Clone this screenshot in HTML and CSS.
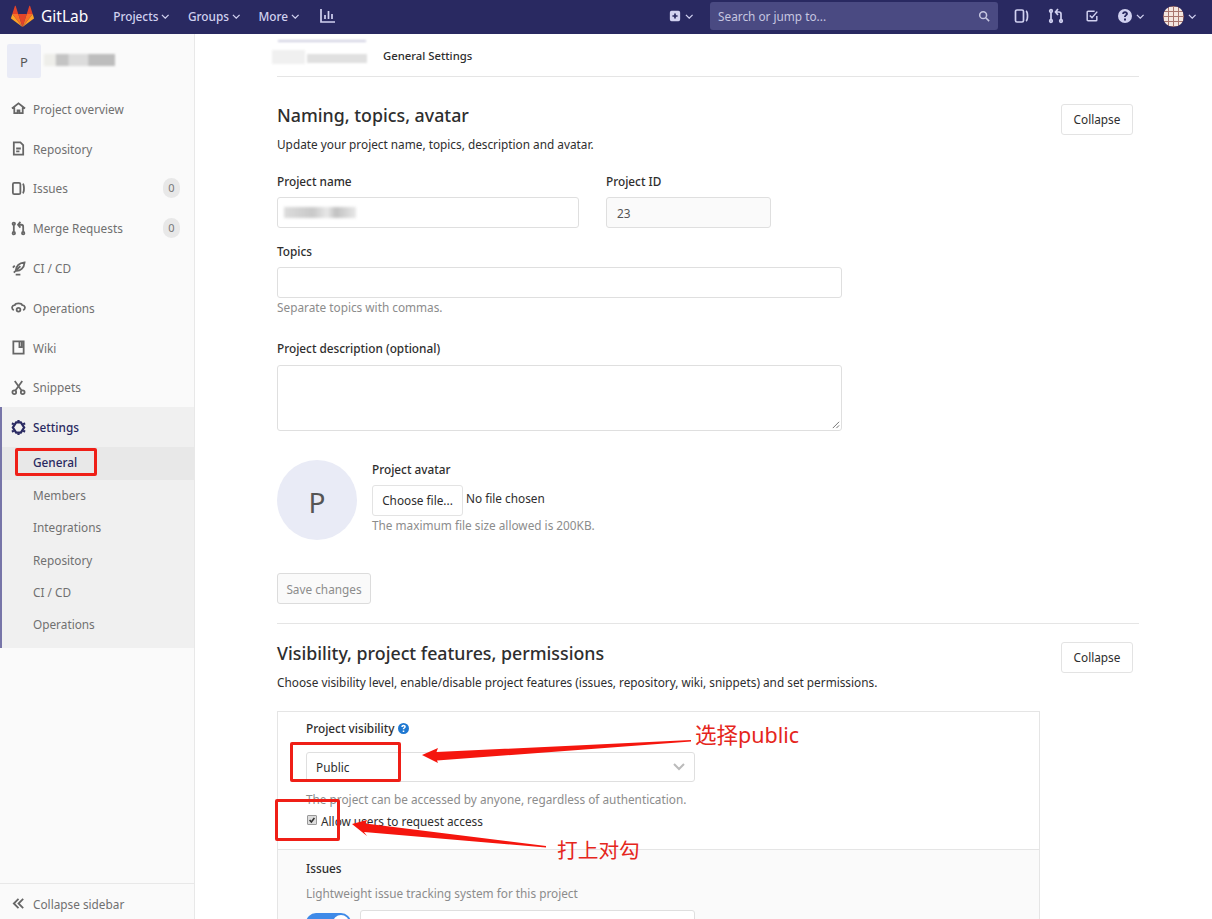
FILE: index.html
```html
<!DOCTYPE html>
<html lang="en">

<head>
    <meta charset="UTF-8">
    <meta name="viewport" content="width=device-width, initial-scale=1.0">
    <title>General Settings</title>
    <link rel="stylesheet" href="styles.css">
</head>

<body>
    <header class="navbar">
        <div class="nav-left">
            <a class="brand">
                <svg class="tanuki" viewBox="0 0 36 36">
                    <path fill="#e24329" d="M18 34.38l6.63-20.4H11.37z" />
                    <path fill="#fc6d26" d="M18 34.38l-6.63-20.4H2.07z" />
                    <path fill="#fca326" d="M2.07 13.98L.05 20.18c-.18.56.02 1.18.5 1.53L18 34.38z" />
                    <path fill="#e24329" d="M2.07 13.98h9.3L7.37 1.68c-.2-.63-1.1-.63-1.3 0z" />
                    <path fill="#fc6d26" d="M18 34.38l6.63-20.4h9.3z" />
                    <path fill="#fca326" d="M33.93 13.98l2.02 6.2c.18.56-.02 1.18-.5 1.53L18 34.38z" />
                    <path fill="#e24329" d="M33.93 13.98h-9.3l4-12.3c.2-.63 1.1-.63 1.3 0z" />
                </svg>
                <span>GitLab</span>
            </a>
            <a class="nav-link">Projects <svg class="caret" viewBox="0 0 10 6"><path d="M1 1l4 4 4-4" /></svg></a>
            <a class="nav-link">Groups <svg class="caret" viewBox="0 0 10 6"><path d="M1 1l4 4 4-4" /></svg></a>
            <a class="nav-link">More <svg class="caret" viewBox="0 0 10 6"><path d="M1 1l4 4 4-4" /></svg></a>
            <svg class="nav-icon chart" viewBox="0 0 16 16"><path d="M1 1v13h14M5 7v4M8.500 3v8M12 6v5" /></svg>
        </div>
        <div class="nav-right">
            <a class="nav-plus">
                <svg class="solid-icon" viewBox="0 0 14 14"><path fill-rule="evenodd" d="M3 1h8a2 2 0 0 1 2 2v8a2 2 0 0 1-2 2H3a2 2 0 0 1-2-2V3a2 2 0 0 1 2-2zm3 3v2H4v2h2v2h2V8h2V6H8V4z" /></svg>
                <svg class="caret" viewBox="0 0 10 6"><path d="M1 1l4 4 4-4" /></svg>
            </a>
            <div class="search">
                <span>Search or jump to...</span>
                <svg class="search-icon" viewBox="0 0 14 14"><circle cx="6" cy="6" r="4" /><path d="M9 9l4 4" /></svg>
            </div>
            <svg class="nav-icon issues-top" viewBox="0 0 16 16"><rect x="1.500" y="2" width="8" height="12" rx="1.500" /><path d="M12 3c2 1 2 9 0 10" /></svg>
            <svg class="nav-icon mr-top" viewBox="0 0 16 16"><circle cx="3" cy="3" r="1.300" /><circle cx="3" cy="13" r="1.300" /><circle cx="13" cy="13" r="1.300" /><path d="M3 4.500v7M13 11.500V6c0-1.500-1-2-2-2H8M10 1L7.500 4 10 7" /></svg>
            <svg class="nav-icon todo-top" viewBox="0 0 16 16"><path d="M13.500 8v4.500a1 1 0 0 1-1 1h-9a1 1 0 0 1-1-1v-9a1 1 0 0 1 1-1H11M5.500 7.500L8 10l6-7" /></svg>
            <a class="nav-help">
                <svg class="solid-icon" viewBox="0 0 14 14"><path fill-rule="evenodd" d="M7 0a7 7 0 1 1 0 14A7 7 0 0 1 7 0zM6 9.500v2h2v-2zM4.200 5h1.900c.1-.7.4-1 .9-1s.9.300.9.800c0 .5-.3.700-.8 1.100-.7.500-1.100 1-1.100 2.100h1.900c0-.6.200-.9.800-1.300.7-.5 1.200-1.100 1.200-2 0-1.500-1.200-2.400-2.900-2.400S4.300 3.300 4.200 5z" /></svg>
                <svg class="caret" viewBox="0 0 10 6"><path d="M1 1l4 4 4-4" /></svg>
            </a>
            <a class="nav-user">
                <span class="user-avatar"></span>
                <svg class="caret" viewBox="0 0 10 6"><path d="M1 1l4 4 4-4" /></svg>
            </a>
        </div>
    </header>

    <div class="page">
        <aside class="sidebar">
            <div class="side-top">
                <div class="side-head">
                    <span class="side-avatar">P</span>
                    <span class="blur-name"></span>
                </div>
                <ul class="side-nav">
                    <li>
                        <svg class="side-icon" viewBox="0 0 16 16"><path d="M1 8l7-5.500L15 8M3.500 7v6h3.500v-3h2v3h3.500V7" /></svg>
                        <span>Project overview</span>
                    </li>
                    <li>
                        <svg class="side-icon" viewBox="0 0 16 16"><path d="M3 1.500h7l3 3v10H3zM5.500 8h5M5.500 11h3.500" /></svg>
                        <span>Repository</span>
                    </li>
                    <li>
                        <svg class="side-icon" viewBox="0 0 16 16"><rect x="2" y="2" width="8" height="12" rx="1.500" /><path d="M12.500 3c1.800 1 1.800 9 0 10" /></svg>
                        <span>Issues</span>
                        <b class="count">0</b>
                    </li>
                    <li>
                        <svg class="side-icon" viewBox="0 0 16 16"><circle cx="3" cy="3" r="1.300" /><circle cx="3" cy="13" r="1.300" /><circle cx="13" cy="13" r="1.300" /><path d="M3 4.500v7M13 11.500V6c0-1.500-1-2-2-2H8M10 1L7.500 4 10 7" /></svg>
                        <span>Merge Requests</span>
                        <b class="count">0</b>
                    </li>
                    <li>
                        <svg class="side-icon" viewBox="0 0 16 16"><path d="M14.500 1.500C9 2 5.500 5 5 10.500c5 .5 9-3 9.500-9zM5 14.500h5M10 5.500L3 12.500M2 7l2-2" /></svg>
                        <span>CI / CD</span>
                    </li>
                    <li>
                        <svg class="side-icon" viewBox="0 0 16 16"><path d="M3 11C0 9 1 5.500 4 5.500 5 3 11 3 12 5.500c3 0 4 3.500 1 5.500" /><circle cx="8" cy="10.500" r="2" /></svg>
                        <span>Operations</span>
                    </li>
                    <li>
                        <svg class="side-icon" viewBox="0 0 16 16"><path d="M2.500 1.500h11v13h-11zM9 1.500v6h2.500v-6" /></svg>
                        <span>Wiki</span>
                    </li>
                    <li>
                        <svg class="side-icon" viewBox="0 0 16 16"><circle cx="3.500" cy="13" r="2" /><circle cx="12.500" cy="13" r="2" /><path d="M4.500 11.500L12 1M11.500 11.500L4 1" /></svg>
                        <span>Snippets</span>
                    </li>
                </ul>
                <div class="side-active">
                    <div class="side-settings">
                        <svg class="side-icon gear" viewBox="0 0 16 16"><path d="M5.500 2.500h5L14 8l-3.500 5.500h-5L2 8z" /><path d="M8 0v2M8 14v2M1 3.500l2 1.200M15 3.500l-2 1.200M1 12.500l2-1.200M15 12.500l-2-1.200" /></svg>
                        <span>Settings</span>
                    </div>
                    <ul class="side-sub">
                        <li class="current">General</li>
                        <li>Members</li>
                        <li>Integrations</li>
                        <li>Repository</li>
                        <li>CI / CD</li>
                        <li>Operations</li>
                    </ul>
                </div>
            </div>
            <div class="side-collapse">
                <svg class="side-icon" viewBox="0 0 16 16"><path d="M8 3L3 8l5 5M13 3L8 8l5 5" /></svg>
                <span>Collapse sidebar</span>
            </div>
        </aside>

        <main class="content">
            <div class="crumbs">
                <span class="blur-crumb"></span>
                <span class="crumb-now">General Settings</span>
            </div>

            <section class="block first">
                <div class="block-head">
                    <div>
                        <h2>Naming, topics, avatar</h2>
                        <p class="lead">Update your project name, topics, description and avatar.</p>
                    </div>
                    <button class="btn collapse">Collapse</button>
                </div>

                <div class="row-two">
                    <div class="name-col">
                        <label>Project name</label>
                        <div class="input"><span class="blur-input"></span></div>
                    </div>
                    <div class="id-col">
                        <label>Project ID</label>
                        <div class="input readonly">23</div>
                    </div>
                </div>

                <div class="wide topics">
                    <label>Topics</label>
                    <div class="input"></div>
                    <p class="help">Separate topics with commas.</p>
                </div>

                <div class="wide descr">
                    <label>Project description (optional)</label>
                    <div class="input area">
                        <svg class="grip" viewBox="0 0 10 10"><path d="M9 2L2 9M9 6L6 9" /></svg>
                    </div>
                </div>

                <div class="avatar-row">
                    <div class="big-avatar">P</div>
                    <div class="avatar-form">
                        <label>Project avatar</label>
                        <div class="file-row">
                            <button class="btn file-btn">Choose file...</button>
                            <span>No file chosen</span>
                        </div>
                        <p class="help">The maximum file size allowed is 200KB.</p>
                    </div>
                </div>

                <button class="btn save">Save changes</button>
            </section>

            <section class="block second">
                <div class="block-head">
                    <div>
                        <h2>Visibility, project features, permissions</h2>
                        <p class="lead">Choose visibility level, enable/disable project features (issues, repository, wiki, snippets) and set permissions.</p>
                    </div>
                    <button class="btn collapse">Collapse</button>
                </div>

                <div class="panel">
                    <div class="panel-main">
                        <label>Project visibility
                            <svg class="q-icon" viewBox="0 0 14 14"><path fill-rule="evenodd" d="M7 0a7 7 0 1 1 0 14A7 7 0 0 1 7 0zM6 9.500v2h2v-2zM4.200 5h1.900c.1-.7.4-1 .9-1s.9.300.9.800c0 .5-.3.700-.8 1.100-.7.500-1.100 1-1.100 2.100h1.900c0-.6.200-.9.800-1.300.7-.5 1.200-1.100 1.200-2 0-1.500-1.200-2.400-2.900-2.400S4.300 3.300 4.200 5z" /></svg>
                        </label>
                        <div class="input select">
                            <span>Public</span>
                            <svg class="select-caret" viewBox="0 0 12 8"><path d="M1 1l5 5 5-5" /></svg>
                        </div>
                        <p class="help">The project can be accessed by anyone, regardless of authentication.</p>
                        <div class="check-row">
                            <span class="check">
                                <svg viewBox="0 0 10 10"><path d="M2 5l2.200 2.500L8 2.500" /></svg>
                            </span>
                            <span>Allow users to request access</span>
                        </div>
                    </div>
                    <div class="panel-sub">
                        <label>Issues</label>
                        <p class="help">Lightweight issue tracking system for this project</p>
                        <div class="toggle-row">
                            <span class="toggle"><i></i></span>
                            <div class="input toggle-select"></div>
                        </div>
                    </div>
                </div>
            </section>
        </main>
    </div>

    <!-- red marks drawn on top of the screenshot -->
    <div class="mark mark-general"></div>
    <div class="mark mark-public"></div>
    <div class="mark mark-check"></div>
    <svg class="arrows" viewBox="0 0 1212 919">
        <path d="M422 755L438 748 436.500 752 691 740 691 741.500 437 760.500 438 763z" />
        <path d="M352 824L367 820 365.500 823.500 546 846 546 847.500 364 832 367 836z" />
    </svg>
    <span class="note note-public">选择public</span>
    <span class="note note-check">打上对勾</span>
</body>

</html>
```

FILE: styles.css
```css
* {
    margin: 0;
    padding: 0;
    box-sizing: border-box;
}

html,
body {
    height: 919px;
    overflow: hidden;
}

body {
    background: #fff;
    color: #2e2e2e;
    font-family: "Noto Sans", "Noto Sans CJK SC", sans-serif;
    font-size: 11.800px;
    line-height: 18px;
}

ul {
    list-style: none;
}

/* top bar */
.navbar {
    height: 34px;
    padding-bottom: 2px;
    background: #292961;
    color: #d1d1f0;
    display: flex;
    justify-content: space-between;
    align-items: center;
}

.nav-left,
.nav-right {
    display: flex;
    align-items: center;
}

.brand {
    display: flex;
    align-items: center;
    margin-left: 11px;
    margin-right: 25px;
    color: #fff;
    font-size: 15.500px;
}

.tanuki {
    width: 23px;
    height: 23px;
    margin-right: 7px;
}

.nav-link {
    margin-right: 18px;
    font-weight: 500;
    white-space: nowrap;
}

.caret {
    width: 8.500px;
    height: 5px;
    vertical-align: 2px;
    fill: none;
    stroke: #d1d1f0;
    stroke-width: 1.500;
}

.nav-icon {
    width: 16px;
    height: 16px;
    fill: none;
    stroke: #d1d1f0;
    stroke-width: 1.700;
}

.chart {
    margin-left: 2px;
}

.solid-icon {
    width: 12px;
    height: 12px;
    fill: #d1d1f0;
}

.nav-plus {
    display: flex;
    align-items: center;
    gap: 4px;
    margin-right: 17px;
}

.search {
    width: 288px;
    height: 28px;
    margin-right: 16px;
    padding: 0 8px;
    border-radius: 3px;
    background: #4a4a82;
    display: flex;
    align-items: center;
    justify-content: space-between;
    color: #c6c6e0;
}

.search-icon {
    width: 12px;
    height: 12px;
    fill: none;
    stroke: #c6c6e0;
    stroke-width: 1.800;
}

.mr-top {
    margin-left: 18px;
}

.todo-top {
    margin-left: 21px;
    width: 14px;
    height: 14px;
}

.nav-help {
    display: flex;
    align-items: center;
    gap: 4px;
    margin-left: 19px;
    margin-right: 18px;
}

.nav-help .solid-icon {
    width: 14px;
    height: 14px;
}

.nav-user {
    display: flex;
    align-items: center;
    gap: 4px;
    margin-right: 16px;
}

.user-avatar {
    width: 21px;
    height: 21px;
    border-radius: 50%;
    background-color: #f3e6e0;
    background-image: linear-gradient(90deg, #a8756e 1.500px, transparent 1.500px), linear-gradient(#a8756e 1.500px, transparent 1.500px);
    background-size: 5px 5px;
}

/* sidebar and content */
.page {
    display: flex;
    height: 885px;
}

.sidebar {
    width: 195px;
    flex: none;
    background: #fafafa;
    border-right: 1px solid #e8e8e8;
    display: flex;
    flex-direction: column;
    justify-content: space-between;
    color: #707070;
}

.side-head {
    height: 55px;
    padding: 10px 0 0 7px;
    display: flex;
}

.side-avatar {
    width: 34px;
    height: 34px;
    border-radius: 2px;
    background: #e9ebf6;
    color: #555;
    font-size: 13px;
    line-height: 36px;
    text-align: center;
}

.blur-name {
    width: 71px;
    height: 12px;
    margin: 10px 0 0 3px;
    background: linear-gradient(90deg, #eeeeea 0, #eeeeea 16%, #c4c4c4 17%, #c4c4c4 34%, #dcdcdc 35%, #dcdcdc 62%, #bdbdbd 63%);
    filter: blur(1px);
}

.side-nav li {
    height: 39.800px;
    padding: 0 14px 0 11px;
    display: flex;
    align-items: center;
}

.side-icon {
    width: 15px;
    height: 15px;
    margin-right: 7px;
    flex: none;
    fill: none;
    stroke: #666;
    stroke-width: 1.900;
}

.count {
    margin-left: auto;
    width: 17px;
    height: 20px;
    border-radius: 9px;
    background: #e8e8e8;
    color: #777;
    font-weight: 400;
    font-size: 11px;
    line-height: 20px;
    text-align: center;
}

.side-active {
    padding-bottom: 6px;
    background: #f0f0f0;
    border-left: 2px solid #7775a8;
}

.side-settings {
    height: 40px;
    padding-left: 9px;
    display: flex;
    align-items: center;
    color: #292961;
    font-weight: 500;
}

.gear {
    stroke: #292961;
    stroke-width: 2.400;
}

.side-sub li {
    height: 32.400px;
    padding-left: 31px;
    line-height: 30px;
}

.side-sub .current {
    background: #e8e8e8;
    color: #292961;
    font-weight: 500;
}

.side-collapse {
    height: 36px;
    padding: 4px 0 0 11px;
    border-top: 1px solid #e8e8e8;
    display: flex;
    align-items: center;
}

.content {
    width: 862px;
    margin-left: 82px;
    flex: none;
}

.crumbs {
    height: 43px;
    border-bottom: 1px solid #e5e5e5;
    position: relative;
    padding-left: 106px;
    padding-top: 12px;
}

/* blurred out group and project name */
.blur-crumb {
    position: absolute;
    left: -5px;
    top: 6px;
    width: 100px;
    height: 26px;
    background:
        linear-gradient(#cfcfe0, #cfcfe0) 6px 0 / 88px 2px no-repeat,
        linear-gradient(#f0f0f0, #f0f0f0) 0 10px / 33px 14px no-repeat,
        linear-gradient(#e0e0e0, #e0e0e0) 35px 14px / 60px 9px no-repeat;
    filter: blur(1px);
}

.crumb-now {
    color: #2e2e2e;
    font-weight: 500;
    font-size: 11.300px;
}

.block.first {
    padding-top: 26px;
    height: 547px;
    border-bottom: 1px solid #e5e5e5;
}

.block.second {
    padding-top: 17px;
}

.block-head {
    display: flex;
    justify-content: space-between;
    padding-right: 6px;
}

h2 {
    color: #2e2e2e;
    font-size: 17.800px;
    font-weight: 500;
    line-height: 24px;
    margin-bottom: 9px;
}

/* 16px line plus 2px under it puts the text one pixel higher in its 18px row */
.lead,
.help,
label,
.check-row {
    line-height: 16px;
    padding-bottom: 2px;
}

.btn {
    height: 31px;
    padding: 0 12px;
    border: 1px solid #e3e3e3;
    border-radius: 3px;
    background: #fff;
    color: #2e2e2e;
    font: inherit;
    margin-top: 1px;
}

.collapse {
    width: 72px;
    padding: 0 0 2px;
}

label {
    display: block;
    color: #2e2e2e;
    font-weight: 500;
}

.input {
    height: 31px;
    margin-top: 6px;
    border: 1px solid #dfdfdf;
    border-radius: 3px;
    background: #fff;
}

.row-two {
    display: flex;
    margin-top: 19px;
}

.name-col {
    width: 302px;
    margin-right: 27px;
}

.id-col {
    width: 165px;
}

.readonly {
    background: #fafafa;
    color: #555;
    padding: 6px 10px;
}

.blur-input {
    display: block;
    width: 72px;
    height: 11px;
    margin: 9px 0 0 6px;
    background: linear-gradient(90deg, #dcdcdc 0, #c8c8c8 40%, #e8e8e8 60%, #c0c0c0 72%, #e8e8e8 100%);
    filter: blur(1.500px);
}

.wide {
    width: 565px;
}

.topics {
    margin-top: 15px;
}

.help {
    color: #8c8c8c;
}

.topics .help {
    margin-top: 1px;
}

.descr {
    margin-top: 23px;
}

.area {
    height: 66px;
    margin-top: 7px;
    position: relative;
}

.grip {
    position: absolute;
    right: 1px;
    bottom: 1px;
    width: 9px;
    height: 9px;
    fill: none;
    stroke: #666;
    stroke-width: 1;
}

.avatar-row {
    display: flex;
    margin-top: 29px;
}

.big-avatar {
    width: 80px;
    height: 80px;
    margin-right: 15px;
    border-radius: 50%;
    background: #e9ebf6;
    color: #555;
    font-size: 28px;
    line-height: 84px;
    text-align: center;
}

.avatar-form {
    padding-top: 1px;
}

.file-row {
    display: flex;
    align-items: flex-start;
    gap: 3px;
    margin-top: 6px;
}

.file-row span {
    margin-top: 4px;
}

.file-btn {
    margin-top: 0;
    width: 91px;
    padding: 0 0 2px;
}

.avatar-form .help {
    margin-top: 1px;
}

.save {
    margin-top: 33px;
    width: 94px;
    padding: 0;
    color: #8c8c8c;
    background: #fafafa;
    border-color: #dcdcdc;
}

.panel {
    width: 763px;
    margin-top: 19px;
    border: 1px solid #e5e5e5;
}

.panel-main {
    height: 138px;
    padding: 8px 28px 0;
    border-bottom: 1px solid #e5e5e5;
}

.q-icon {
    width: 11px;
    height: 11px;
    vertical-align: -1px;
    fill: #1f78d1;
}

.select {
    width: 389px;
    height: 30px;
    margin-top: 14px;
    padding: 0 9px;
    display: flex;
    align-items: center;
    justify-content: space-between;
}

.select-caret {
    width: 12px;
    height: 8px;
    fill: none;
    stroke: #bbb;
    stroke-width: 2;
}

.panel-main .help {
    margin-top: 9px;
}

.check-row {
    display: flex;
    align-items: center;
    gap: 4px;
    margin-top: 4px;
    color: #2e2e2e;
}

.check {
    width: 10px;
    height: 10px;
    margin-left: 1px;
    margin-bottom: 2px;
    border-radius: 1px;
    background: #ddd;
    border: 1px solid #999;
    display: flex;
}

.check svg {
    fill: none;
    stroke: #333;
    stroke-width: 2;
}

.panel-sub {
    padding: 10px 28px 0;
    height: 100px;
    background: #fafafa;
}

.panel-sub .help {
    margin-top: 7px;
}

.toggle-row {
    display: flex;
    align-items: flex-start;
    gap: 9px;
    margin-top: 7px;
}

.toggle {
    width: 45px;
    height: 20px;
    margin-top: 3px;
    border-radius: 10px;
    background: #3f8ae8;
    position: relative;
}

.toggle i {
    position: absolute;
    right: 2px;
    top: 2px;
    width: 16px;
    height: 16px;
    border-radius: 50%;
    background: #fff;
}

.toggle-select {
    width: 335px;
    margin-top: 0;
}

/* annotations over the page */
.mark {
    position: absolute;
    border: 3px solid #ef1f17;
    border-radius: 2px;
}

.mark-general {
    left: 15px;
    top: 448px;
    width: 82px;
    height: 28px;
}

.mark-public {
    left: 290px;
    top: 742px;
    width: 111px;
    height: 40px;
}

.mark-check {
    left: 275px;
    top: 799px;
    width: 65px;
    height: 42px;
}

.arrows {
    position: absolute;
    left: 0;
    top: 0;
    width: 1212px;
    height: 919px;
    fill: #f5160e;
    pointer-events: none;
}

.note {
    position: absolute;
    color: #e5261c;
    font-size: 21.500px;
    line-height: 26px;
    white-space: nowrap;
}

.note-public {
    left: 695px;
    top: 722px;
}

.note-check {
    left: 557px;
    top: 837px;
    font-size: 20.700px;
}
```
